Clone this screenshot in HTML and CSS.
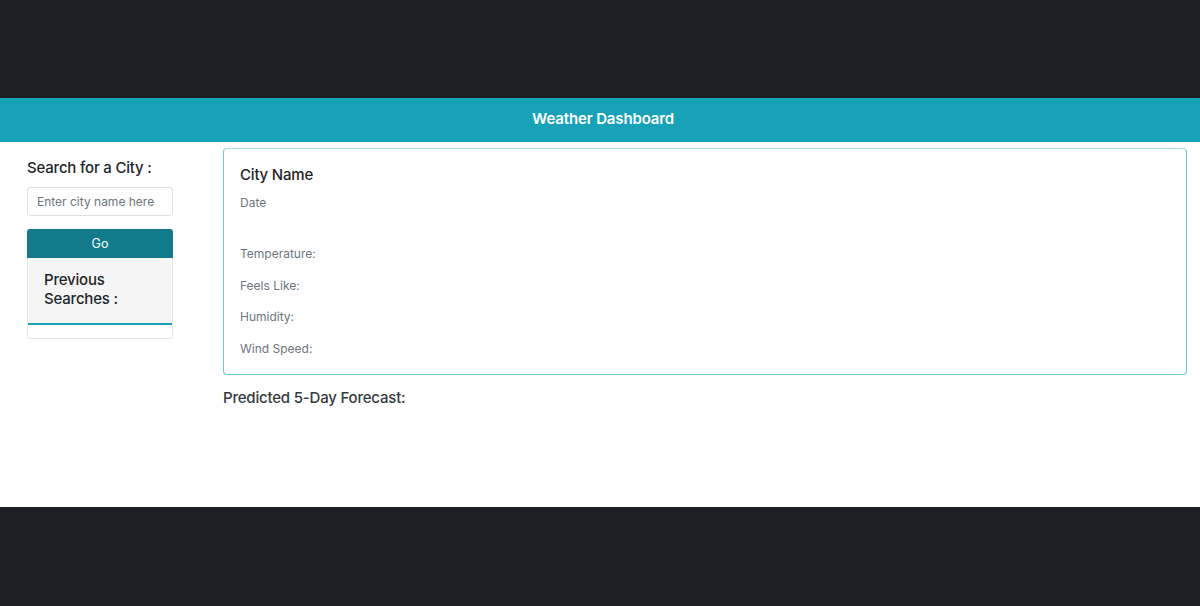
FILE: index.html
```html
<!DOCTYPE html>
<html>
<head>
<meta charset="utf-8">
<link rel="stylesheet" href="styles.css">
</head>
<body>
<div class="page">
  <header class="topbar">Weather Dashboard</header>
  <div class="content">
    <aside class="sidebar">
      <h2 class="search-title">Search for a City :</h2>
      <input class="city-input" type="text" placeholder="Enter city name here">
      <button class="go-btn">Go</button>
      <div class="history-card">
        <div class="history-header">Previous<br>Searches :</div>
        <div class="history-body"></div>
      </div>
    </aside>
    <main class="main">
      <section class="current-card">
        <h3 class="city-name">City Name</h3>
        <p class="date">Date</p>
        <p class="stat stat-first">Temperature:</p>
        <p class="stat">Feels Like:</p>
        <p class="stat">Humidity:</p>
        <p class="stat">Wind Speed:</p>
      </section>
      <h2 class="forecast-title">Predicted 5-Day Forecast:</h2>
    </main>
  </div>
</div>
</body>
</html>
```
FILE: styles.css
```css
html, body {
  margin: 0;
  padding: 0;
}
body {
  background: #1b1e22;
  font-family: Inter, "Liberation Sans", Arial, sans-serif;
  color: #212529;
}
.page {
  margin-top: 98px;
  height: 409px;
  background: #ffffff;
}
.topbar {
  height: 44px;
  background: #17a2b8;
  color: #ffffff;
  font-weight: 600;
  font-size: 15px;
  letter-spacing: -0.15px;
  display: flex;
  align-items: center;
  justify-content: center;
  padding: 0 0 4px 6px;
  box-sizing: border-box;
}
.content {
  display: flex;
  gap: 50px;
  padding: 6px 13px 0 27px;
}
.sidebar {
  width: 146px;
  flex-shrink: 0;
  display: flex;
  flex-direction: column;
}
.search-title {
  margin: 10px 0 10px;
  font-size: 15px;
  font-weight: 500;
  line-height: 19px;
  letter-spacing: -0.2px;
}
.city-input {
  height: 29px;
  box-sizing: border-box;
  border: 1px solid #dee2e6;
  border-radius: 3px;
  padding: 0 9px;
  font-family: inherit;
  font-size: 12px;
  color: #495057;
  outline: none;
}
.city-input::placeholder {
  color: #6c757d;
}
.go-btn {
  margin-top: 13px;
  height: 29px;
  border: none;
  border-radius: 3px 3px 0 0;
  background: #117a8b;
  color: #ffffff;
  font-family: inherit;
  font-size: 12.5px;
}
.history-card {
  border: 1px solid #e6e6e6;
  border-top: none;
  border-radius: 0 0 3px 3px;
}
.history-header {
  background: #f5f5f5;
  padding: 12px 16px 15px;
  font-size: 15px;
  font-weight: 500;
  line-height: 19px;
  letter-spacing: -0.2px;
  border-bottom: 2px solid #17a2b8;
}
.history-body {
  height: 13px;
}
.main {
  flex: 1;
}
.current-card {
  border: 1px solid #6cc9d6;
  border-top-color: #a6dde6;
  border-radius: 4px;
  padding: 16px 16px 16px;
  display: flex;
  flex-direction: column;
}
.city-name {
  margin: 0;
  font-size: 15px;
  font-weight: 500;
  line-height: 19px;
  letter-spacing: -0.2px;
}
.date, .stat {
  margin: 9px 0 0;
  font-size: 12px;
  line-height: 19.5px;
  color: #6c757d;
}
.stat {
  margin-top: 12px;
}
.stat-first {
  margin-top: 31.5px;
}
.forecast-title {
  margin: 12.5px 0 0;
  font-size: 15px;
  font-weight: 500;
  line-height: 19px;
  color: #343a40;
  letter-spacing: -0.2px;
}
```
